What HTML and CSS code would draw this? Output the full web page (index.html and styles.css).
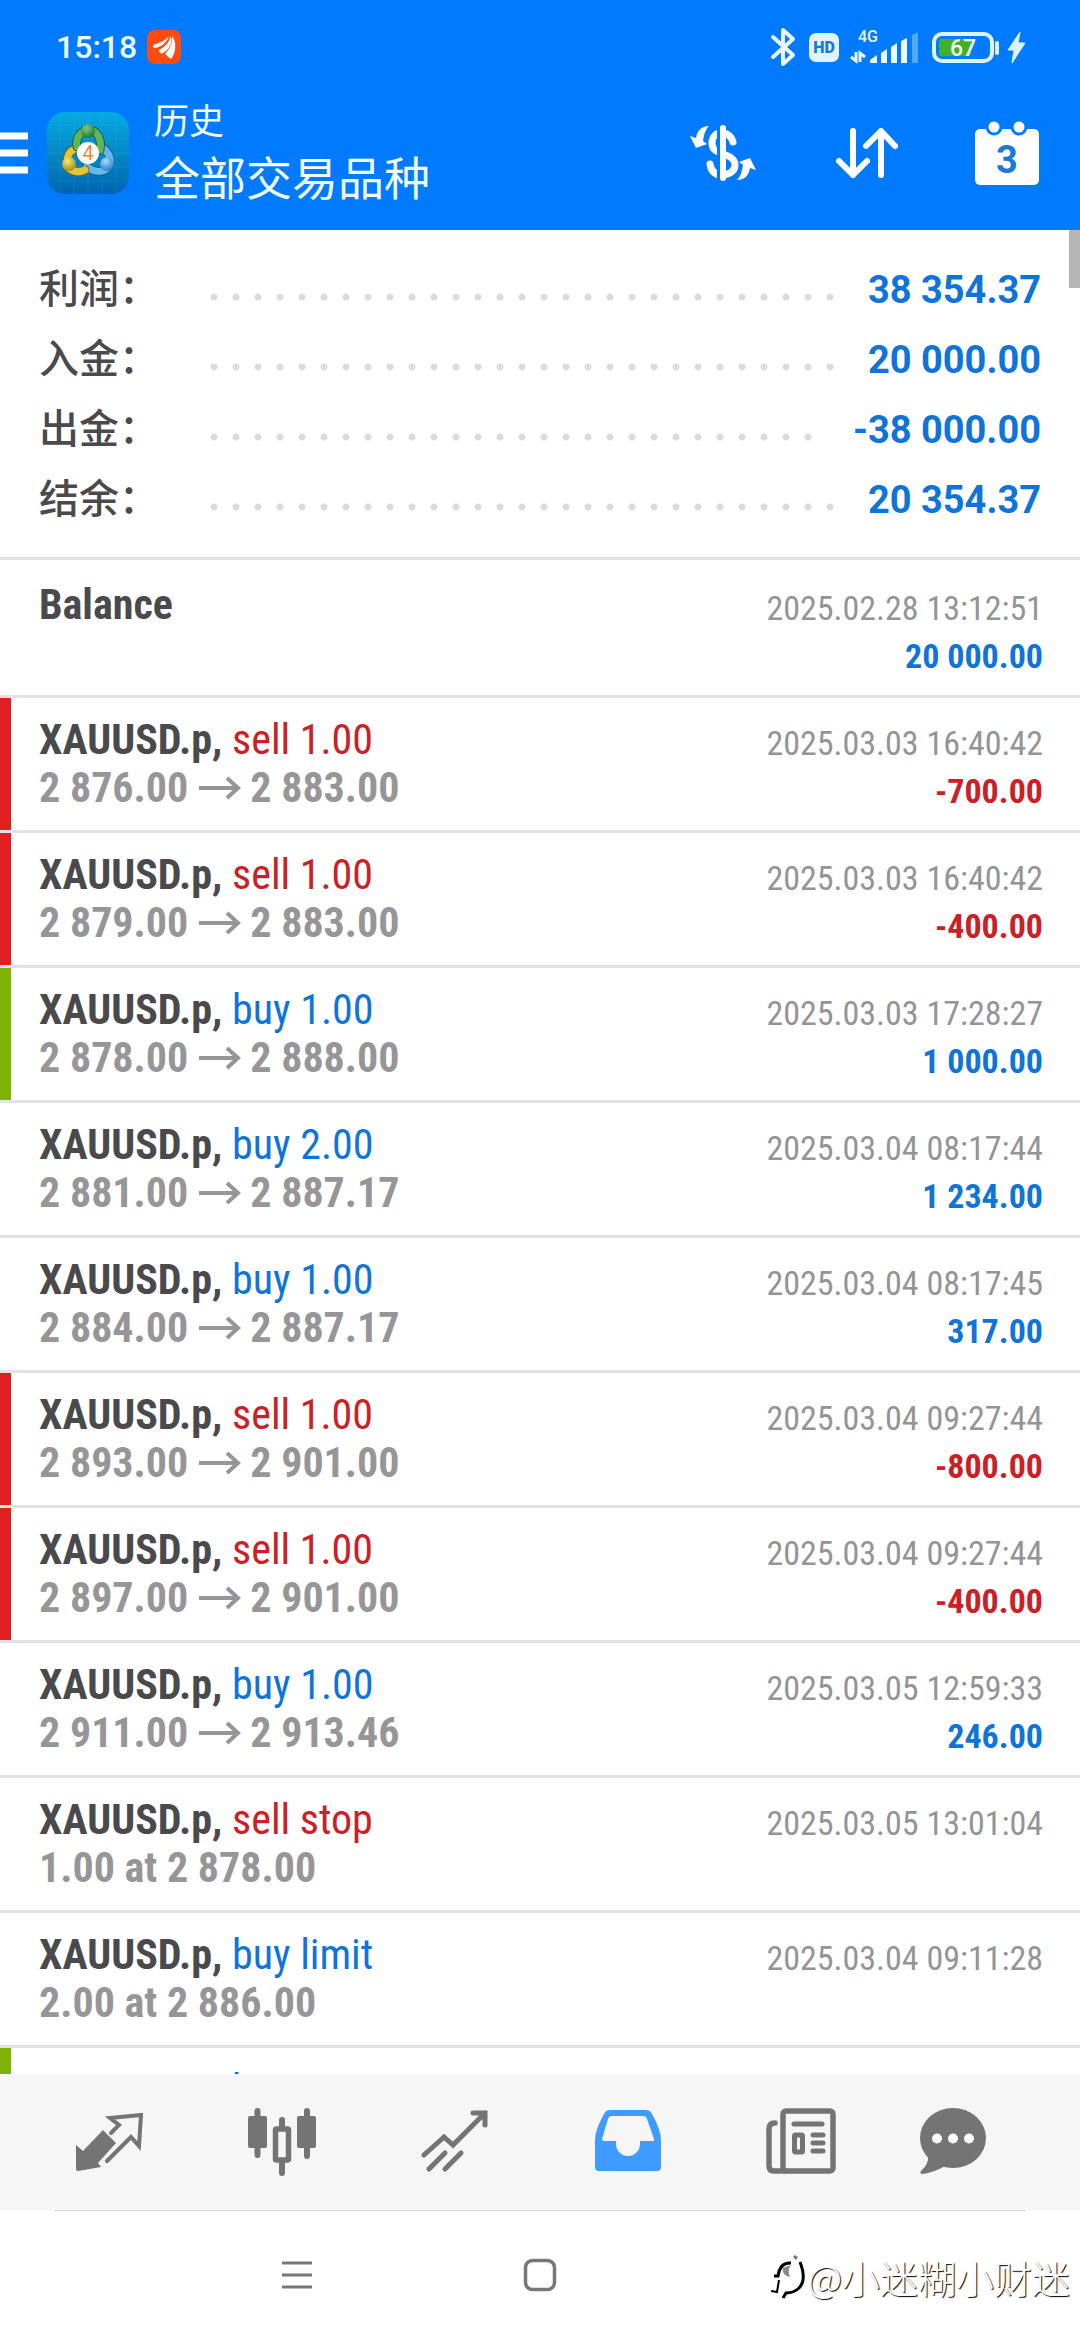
FILE: index.html
```html
<!DOCTYPE html>
<html lang="zh-CN">
<head>
<meta charset="utf-8">
<meta name="viewport" content="width=device-width">
<title>历史</title>
<link rel="stylesheet" href="styles.css">
</head>
<body>
<svg class="defs" aria-hidden="true">
  <symbol id="arrow" viewBox="0 0 44 24"><path d="M1 12H41M29 2L40 12L29 22" fill="none" stroke="currentColor" stroke-width="4"/></symbol>
</svg>
<header class="header">
  <div class="status">
    <span class="time">15:18</span>
    <svg class="badge" width="34" height="34" viewBox="0 0 34 34"><rect width="34" height="34" rx="8" fill="#ff4b10"/><g fill="#fff"><path d="M6 15C12 13 18 11 22 6C20 13 13 18 7 18C6 17 6 16 6 15Z"/><path d="M12 20C18 17 22 13 23.500 6C27 13 21 21 15 23.500C13 23 12 22 12 20Z"/><path d="M18 24C23 19 26 13 25 6C30 12 29 23 24 29C22 28 21 26 18 24Z"/></g></svg>
    <span class="spacer"></span>
    <svg width="256" height="40" viewBox="0 0 256 40" aria-label="67%">
      <path d="M3 10L23 28L13 37V3L23 12L3 30" fill="none" stroke="#e9f8ff" stroke-width="4" stroke-linejoin="round" stroke-linecap="round"/>
      <rect x="39" y="6" width="30" height="29" rx="7" fill="#e3f2fd"/>
      <text x="54" y="26" class="hd">HD</text>
      <text x="98" y="15" class="net">4G</text>
      <path d="M86 25V34L81 30M90 35V26L95 30" fill="none" stroke="#e9f8ff" stroke-width="3"/>
      <g fill="#f4fbff"><path d="M100 33L107 28V36H100Z"/><path d="M111 26L117 22V36H111Z"/><path d="M121 20L127 16V36H121Z"/><path d="M131 14L137 11V36H131Z"/><path d="M142 8L148 5V36H142Z" opacity=".35"/></g>
      <rect x="164" y="7" width="58" height="27" rx="8" fill="none" stroke="#dcf3ff" stroke-width="4"/>
      <rect x="169" y="12" width="32" height="17" rx="2" fill="#43b02a"/>
      <path d="M227 16V26" stroke="#dcf3ff" stroke-width="4" stroke-linecap="round"/>
      <text x="193" y="29" class="level">67</text>
      <path d="M250 5L238 23H244L242 36L255 16H248Z" fill="#dcf3ff" stroke="#dcf3ff"/>
    </svg>
  </div>
  <div class="appbar">
    <button class="icon-btn" aria-label="菜单"><svg width="28" height="42" viewBox="0 0 28 42"><path d="M0 4H28M0 21H28M0 38H28" stroke="#fff" stroke-width="7"/></svg></button>
    <svg class="logo" width="82" height="82" viewBox="0 0 82 82">
      <defs>
        <linearGradient id="sky" x1="0" y1="0" x2="0" y2="1"><stop offset="0" stop-color="#06a9e4"/><stop offset=".5" stop-color="#0589c6"/><stop offset="1" stop-color="#0063b0"/></linearGradient>
        <radialGradient id="gg" cx=".4" cy=".3" r=".8"><stop offset="0" stop-color="#7fcb78"/><stop offset="1" stop-color="#1a6a34"/></radialGradient>
        <radialGradient id="yy" cx=".4" cy=".3" r=".8"><stop offset="0" stop-color="#f6ea7c"/><stop offset="1" stop-color="#a07d08"/></radialGradient>
        <radialGradient id="bb" cx=".4" cy=".3" r=".8"><stop offset="0" stop-color="#a4dcff"/><stop offset="1" stop-color="#1a70bd"/></radialGradient>
      </defs>
      <rect width="82" height="82" rx="18" fill="url(#sky)"/>
      <path d="M13 0V82M27 0V82M41 0V82M55 0V82M69 0V82M0 13H82M0 27H82M0 41H82M0 55H82M0 69H82" stroke="#28b6e8" stroke-opacity=".22"/>
      <g fill="none" stroke-linecap="round">
        <path d="M56 36C63 42 66 50 61 55C57 61 46 61 40 54" stroke="#155c94" stroke-width="9"/><path d="M56 36C63 42 66 50 61 55C57 61 46 61 40 54" stroke="#63b8ec" stroke-width="7"/>
        <path d="M38 58C30 62 20 58 20 51C20 44 22 39 28 37" stroke="#7c6a10" stroke-width="9"/><path d="M38 58C30 62 20 58 20 51C20 44 22 39 28 37" stroke="#dfc63e" stroke-width="7"/>
        <path d="M30 35C28 26 34 18 42 18C50 18 55 27 53 38" stroke="#1b632e" stroke-width="9"/><path d="M30 35C28 26 34 18 42 18C50 18 55 27 53 38" stroke="#62b45c" stroke-width="7"/>
      </g>
      <circle cx="41" cy="19" r="7" fill="url(#gg)"/><circle cx="22" cy="52" r="7" fill="url(#yy)"/><circle cx="60" cy="52" r="7" fill="url(#bb)"/>
      <circle cx="41" cy="41" r="11" fill="#fff"/><text x="41" y="48" class="four">4</text>
    </svg>
    <div class="titles"><p class="title">历史</p><p class="subtitle">全部交易品种</p></div>
    <button class="icon-btn" aria-label="货币"><svg width="72" height="64" viewBox="0 0 72 64">
      <path d="M46 21C44 14 39 12 34 12C28 12 25 17 25 22C25 29 30 31 36 33C43 35 48 38 48 44C48 50 42 54 35 54C28 54 24 50 23 43" fill="none" stroke="#fff" stroke-width="7" stroke-linecap="round"/>
      <path d="M31.500 8V58" stroke="#007aff" stroke-width="3"/><path d="M36 7V57" stroke="#fff" stroke-width="6" stroke-linecap="round"/>
      <path id="swap" d="M22 5C14 5 10 10 9 17L3 15L9 27L20 23L16 20C17 14 18 9 22 5Z" fill="#fff"/><use href="#swap" transform="rotate(180 36 32)"/></svg></button>
    <button class="icon-btn" aria-label="排序"><svg width="72" height="64" viewBox="0 0 72 64"><path d="M22 10V54M8 40L22 54L36 40M50 54V10M35 25L50 10L64 25" fill="none" stroke="#fff" stroke-width="6" stroke-linecap="round" stroke-linejoin="round"/></svg></button>
    <button class="icon-btn" aria-label="日期"><svg width="64" height="64" viewBox="0 0 64 64"><rect y="8" width="64" height="56" rx="5" fill="#fff"/><g fill="#fff" stroke="#007aff" stroke-width="3"><circle cx="19" cy="6" r="7"/><circle cx="44" cy="6" r="7"/></g><text x="32" y="52" class="day">3</text></svg></button>
  </div>
</header>

<main class="main">
  <dl class="summary">
    <div class="sum-row"><dt>利润：</dt><dd>38 354.37</dd></div>
    <div class="sum-row"><dt>入金：</dt><dd>20 000.00</dd></div>
    <div class="sum-row"><dt>出金：</dt><dd>-38 000.00</dd></div>
    <div class="sum-row"><dt>结余：</dt><dd>20 354.37</dd></div>
  </dl>
  <ul class="deals">
    <li class="deal"><div class="left"><p class="name">Balance</p></div><div class="right"><time>2025.02.28 13:12:51</time><span class="amount buy">20 000.00</span></div></li>
    <li class="deal sl"><div class="left"><p class="name">XAUUSD.p, <span class="sell">sell 1.00</span></p><p class="price">2 876.00<svg class="arrow"><use href="#arrow"/></svg>2 883.00</p></div><div class="right"><time>2025.03.03 16:40:42</time><span class="amount sell">-700.00</span></div></li>
    <li class="deal sl"><div class="left"><p class="name">XAUUSD.p, <span class="sell">sell 1.00</span></p><p class="price">2 879.00<svg class="arrow"><use href="#arrow"/></svg>2 883.00</p></div><div class="right"><time>2025.03.03 16:40:42</time><span class="amount sell">-400.00</span></div></li>
    <li class="deal tp"><div class="left"><p class="name">XAUUSD.p, <span class="buy">buy 1.00</span></p><p class="price">2 878.00<svg class="arrow"><use href="#arrow"/></svg>2 888.00</p></div><div class="right"><time>2025.03.03 17:28:27</time><span class="amount buy">1 000.00</span></div></li>
    <li class="deal"><div class="left"><p class="name">XAUUSD.p, <span class="buy">buy 2.00</span></p><p class="price">2 881.00<svg class="arrow"><use href="#arrow"/></svg>2 887.17</p></div><div class="right"><time>2025.03.04 08:17:44</time><span class="amount buy">1 234.00</span></div></li>
    <li class="deal"><div class="left"><p class="name">XAUUSD.p, <span class="buy">buy 1.00</span></p><p class="price">2 884.00<svg class="arrow"><use href="#arrow"/></svg>2 887.17</p></div><div class="right"><time>2025.03.04 08:17:45</time><span class="amount buy">317.00</span></div></li>
    <li class="deal sl"><div class="left"><p class="name">XAUUSD.p, <span class="sell">sell 1.00</span></p><p class="price">2 893.00<svg class="arrow"><use href="#arrow"/></svg>2 901.00</p></div><div class="right"><time>2025.03.04 09:27:44</time><span class="amount sell">-800.00</span></div></li>
    <li class="deal sl"><div class="left"><p class="name">XAUUSD.p, <span class="sell">sell 1.00</span></p><p class="price">2 897.00<svg class="arrow"><use href="#arrow"/></svg>2 901.00</p></div><div class="right"><time>2025.03.04 09:27:44</time><span class="amount sell">-400.00</span></div></li>
    <li class="deal"><div class="left"><p class="name">XAUUSD.p, <span class="buy">buy 1.00</span></p><p class="price">2 911.00<svg class="arrow"><use href="#arrow"/></svg>2 913.46</p></div><div class="right"><time>2025.03.05 12:59:33</time><span class="amount buy">246.00</span></div></li>
    <li class="deal"><div class="left"><p class="name">XAUUSD.p, <span class="sell">sell stop</span></p><p class="price">1.00 at 2 878.00</p></div><div class="right"><time>2025.03.05 13:01:04</time></div></li>
    <li class="deal"><div class="left"><p class="name">XAUUSD.p, <span class="buy">buy limit</span></p><p class="price">2.00 at 2 886.00</p></div><div class="right"><time>2025.03.04 09:11:28</time></div></li>
    <li class="deal tp"><div class="left"><p class="name">XAUUSD.p, <span class="buy">buy 2.00</span></p></div></li>
  </ul>
  <div class="scrollbar"></div>
</main>

<nav class="tabs">
  <button class="tab" aria-label="行情"><svg viewBox="0 0 72 72"><path d="M3 39L10 45L30 24L43 37L25 57L28 61L5 65Q3 65 3 63Z" fill="currentColor"/><path d="M38 27L46 19L37 12L68 9L66 40L58 31L34 55" fill="none" stroke="currentColor" stroke-width="4" stroke-linecap="round"/></svg></button>
  <button class="tab" aria-label="图表"><svg viewBox="0 0 72 72"><g fill="currentColor"><rect x="2" y="10" width="19" height="32" rx="2"/><rect x="51" y="10" width="19" height="32" rx="2"/></g><rect x="29.500" y="23" width="13" height="31" rx="1" fill="none" stroke="currentColor" stroke-width="5.500"/><path d="M11.500 5V49M61 5V50M36 14V22M36 56V67" stroke="currentColor" stroke-width="6" stroke-linecap="round"/></svg></button>
  <button class="tab" aria-label="交易"><svg viewBox="0 0 72 72"><path d="M5 49L25 31L34 39L66 7M54 7H66V19M10 63L26 47M26 63L42 47" fill="none" stroke="currentColor" stroke-width="5" stroke-linecap="round"/></svg></button>
  <button class="tab active" aria-label="历史"><svg viewBox="0 0 72 72"><path fill-rule="evenodd" d="M18 4H54Q58 4 60 8Q69 24 69 34V61Q69 65 65 65H7Q3 65 3 61V34Q3 24 12 8Q14 4 18 4ZM20 10Q17 10 16 13L10 33Q10 35 12 35H24V38A12 12 0 0 0 48 38V35H60Q63 35 62 33L55 13Q54 10 51 10Z" fill="currentColor"/></svg></button>
  <button class="tab" aria-label="新闻"><svg viewBox="0 0 72 72"><g fill="none" stroke="currentColor" stroke-width="5.500" stroke-linecap="round"><rect x="18" y="5" width="50" height="60" rx="3"/><path d="M10 17Q4 17 4 23V60Q4 65 9 65H20"/><path d="M29 18H57M48 29H58M48 37H58M48 45H58" stroke-width="5"/><rect x="29.500" y="29" width="8" height="17" rx="1" stroke-width="5"/></g></svg></button>
  <button class="tab" aria-label="消息"><svg viewBox="0 0 72 72"><ellipse cx="36" cy="32" rx="33" ry="30" fill="currentColor"/><path d="M11 50Q12 58 4 65Q2 68 6 68Q18 66 28 60Z" fill="currentColor"/><g fill="#fff"><circle cx="20" cy="32.500" r="5"/><circle cx="36" cy="32.500" r="5"/><circle cx="52" cy="32.500" r="5"/></g></svg></button>
</nav>

<footer class="sysnav">
  <button class="icon-btn" aria-label="最近任务"><svg width="34" height="34" viewBox="0 0 34 34"><path d="M2 5H32M2 17H32M2 29H32" stroke="#777" stroke-width="3"/></svg></button>
  <button class="icon-btn" aria-label="主屏幕"><svg width="34" height="34" viewBox="0 0 34 34"><rect x="2.500" y="2.500" width="29" height="29" rx="7" fill="none" stroke="#777" stroke-width="3.500"/></svg></button>
  <span></span>
  <p class="mark"><svg width="36" height="46" viewBox="0 0 36 46"><path d="M3 22H7Q9 8 20 9" fill="none" stroke="#000" stroke-width="3"/><path d="M8 26L6 38L0 37" fill="none" stroke="#000" stroke-width="2"/><path d="M29 8Q36 26 28 34Q23 39 15 39L12 44" fill="none" stroke="#000" stroke-width="3"/><path d="M12 14Q11 22 19 23Q16 16 20 11Z" fill="#888"/><path d="M24 1L27 3L25 6L22 3Z" fill="#777"/></svg>@小迷糊小财迷</p>
</footer>
</body>
</html>
```
FILE: styles.css
```css
* { box-sizing: border-box; }

body {
  margin: 0;
  height: 100vh;
  display: flex;
  flex-direction: column;
  overflow: hidden;
  background: #fff;
  color: #4a4a4d;
  font-family: Roboto, "Noto Sans CJK SC", sans-serif;
}

p, dl, dd, ul { margin: 0; padding: 0; }
ul { list-style: none; }
button { padding: 0; border: 0; background: none; color: inherit; font: inherit; }
svg { display: block; flex: none; }
.defs { position: absolute; width: 0; height: 0; }

/* Header */
.header { flex: none; background: #007aff; color: #f0fbff; }
.status { display: flex; align-items: center; height: 76px; padding: 18px 54px 0 56px; }
.time { font-size: 32px; font-weight: 500; line-height: 40px; }
.badge { margin-left: 10px; }
.spacer { flex: 1; }
.hd { font: 900 16px Roboto, sans-serif; fill: #1f78cf; text-anchor: middle; }
.net { font: 500 16px Roboto, sans-serif; fill: #e9f8ff; text-anchor: middle; }
.level { font: 500 23px Roboto, sans-serif; fill: #f0fbe8; text-anchor: middle; }

.appbar { display: flex; align-items: center; gap: 72px; height: 154px; padding-right: 41px; }
.logo { margin-left: -53px; }
.titles { flex: 1; margin-left: -47px; }
.title { font-size: 35px; line-height: 52px; }
.subtitle { font-size: 46px; line-height: 60px; }
.four { font: 400 20px Roboto, sans-serif; fill: #f0883c; text-anchor: middle; }
.day { font: 700 38px Roboto, sans-serif; fill: #1a78d8; text-anchor: middle; }

/* Account summary */
.main { position: relative; flex: 1 1 0; min-height: 0; overflow: hidden; }
.summary { padding: 25px 39px 22px; border-bottom: 3px solid #e3e3e3; }
.sum-row { display: flex; align-items: center; height: 70px; }
.sum-row dt { width: 171px; font-size: 40px; font-weight: 500; line-height: 60px; }
.sum-row::after {
  content: "";
  order: 1;
  flex: 1;
  height: 8px;
  margin: 14px 27px 0 0;
  background: radial-gradient(circle at 4px 4px, #dcdcde 3px, transparent 4px) 0 0 / 22px 8px repeat-x;
}
.sum-row dd { order: 2; color: #0f74da; font-size: 38px; font-weight: 700; line-height: 60px; }

/* Deals */
.deals { padding-top: 3px; font-family: "Roboto Condensed", "Liberation Sans Narrow", Roboto, sans-serif; }
.deal { position: relative; display: flex; justify-content: space-between; height: 135px; padding: 18px 37px 0 39px; border-bottom: 3px solid #e3e3e3; }
.sl::before, .tp::before { content: ""; position: absolute; left: 0; top: 0; bottom: 0; width: 11px; background: #e02020; }
.tp::before { background: #7cb305; }
.name, .price { font-size: 42px; line-height: 48px; font-weight: 700; white-space: nowrap; }
.name span { font-weight: 400; }
.price { display: flex; align-items: center; color: #969698; }
.arrow { width: 44px; height: 24px; margin: 0 8px 0 10px; }
.right { display: flex; flex-direction: column; align-items: flex-end; padding-top: 3px; font-size: 34px; line-height: 48px; white-space: nowrap; }
.right time { color: #949496; }
.amount { font-weight: 700; }
.buy { color: #0f74da; }
.sell { color: #cc2027; }
.scrollbar { position: absolute; top: 0; right: 0; width: 11px; height: 58px; background: #b6b6b6; }

/* Bottom tabs */
.tabs { flex: none; display: grid; grid-template-columns: repeat(5, 173fr) 131fr; height: 136px; padding: 0 61px 0 22px; background: #f6f6f6; }
.tab { display: grid; place-items: center; color: #747474; }
.tab svg { width: 72px; height: 72px; }
.active { color: #3f9bff; }

/* System navigation */
.sysnav { position: relative; flex: none; display: grid; grid-template-columns: repeat(3, 9fr); align-items: center; height: 130px; padding: 0 176px; }
.sysnav::before { content: ""; position: absolute; top: 0; left: 5%; right: 5%; height: 1px; background: #d6d6d6; }
.icon-btn { display: grid; place-items: center; }
.mark {
  position: absolute;
  right: 10px;
  bottom: 37px;
  display: flex;
  align-items: center;
  color: #fff;
  font: 300 38px/52px "Noto Sans CJK SC", sans-serif;
  text-shadow: 1px 1px 1px #000;
}
```
